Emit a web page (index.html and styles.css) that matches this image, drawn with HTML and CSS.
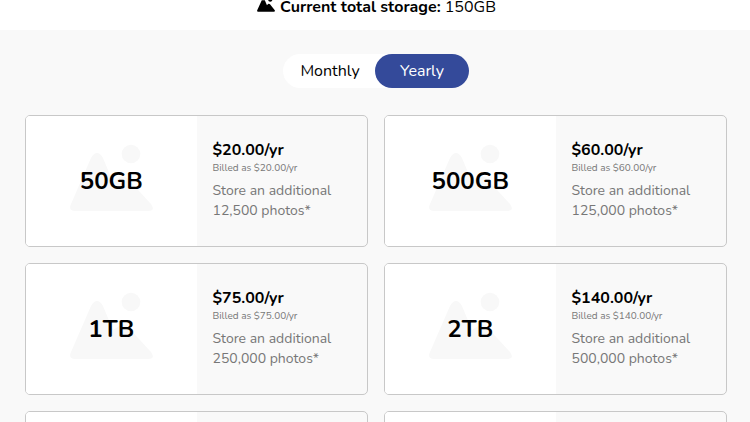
FILE: index.html
```html
<!DOCTYPE html>
<html lang="en">
<head>
<meta charset="utf-8">
<meta name="viewport" content="width=device-width, initial-scale=1">
<title>Storage plans</title>
<link rel="stylesheet" href="styles.css">
</head>
<body>
<svg class="defs" aria-hidden="true">
  <symbol id="peaks" viewBox="0 0 83 74">
    <path d="M1 60L21 14Q27 4 33 14L43 38L49 34Q53 31 57 34L81 60Q86 67 78 67H5Q-2 67 1 60Z"/>
    <circle cx="61" cy="10" r="9.3"/>
  </symbol>
</svg>
<header class="summary">
  <svg class="summary-icon" viewBox="0 13 83 54" aria-hidden="true">
    <path d="M1 60L22 13H36L46 36L51 31Q55 27 60 32L82 60Q85 67 77 67H5Q-1 66 1 60Z"/>
    <circle cx="61" cy="10" r="10"/>
  </svg>
  <p class="summary-text"><strong>Current total storage:</strong> 150GB</p>
</header>
<main class="plans">
  <div class="toggle">
    <button class="period" type="button" aria-pressed="false">Monthly</button>
    <button class="period active" type="button" aria-pressed="true">Yearly</button>
  </div>
  <div class="grid">
    <article class="card">
      <div class="size"><svg class="watermark" aria-hidden="true"><use href="#peaks"/></svg><h2 class="amount">50GB</h2></div>
      <div class="details"><p class="price">$20.00/yr</p><p class="billed">Billed as $20.00/yr</p><p class="note">Store an additional<br>12,500 photos*</p></div>
    </article>
    <article class="card">
      <div class="size"><svg class="watermark" aria-hidden="true"><use href="#peaks"/></svg><h2 class="amount">500GB</h2></div>
      <div class="details"><p class="price">$60.00/yr</p><p class="billed">Billed as $60.00/yr</p><p class="note">Store an additional<br>125,000 photos*</p></div>
    </article>
    <article class="card">
      <div class="size"><svg class="watermark" aria-hidden="true"><use href="#peaks"/></svg><h2 class="amount">1TB</h2></div>
      <div class="details"><p class="price">$75.00/yr</p><p class="billed">Billed as $75.00/yr</p><p class="note">Store an additional<br>250,000 photos*</p></div>
    </article>
    <article class="card">
      <div class="size"><svg class="watermark" aria-hidden="true"><use href="#peaks"/></svg><h2 class="amount">2TB</h2></div>
      <div class="details"><p class="price">$140.00/yr</p><p class="billed">Billed as $140.00/yr</p><p class="note">Store an additional<br>500,000 photos*</p></div>
    </article>
    <article class="card"><div class="size"></div><div class="details"></div></article>
    <article class="card"><div class="size"></div><div class="details"></div></article>
  </div>
</main>
</body>
</html>
```
FILE: styles.css
```css
* {
  box-sizing: border-box;
}

body {
  margin: 0;
  height: 100vh;
  overflow: hidden;
  background: #f9f9f9;
  color: #000;
  font-family: Nunito, Lato, "Open Sans", sans-serif;
  font-size: 16px;
  line-height: 20px;
}

p,
h2 {
  margin: 0;
}

.defs {
  position: absolute;
  width: 0;
  height: 0;
}

.summary {
  display: flex;
  justify-content: center;
  align-items: flex-start;
  gap: 5px;
  height: 30px;
  padding-left: 3px;
  background: #fff;
}

.summary-icon {
  width: 18px;
  height: 12px;
}

.summary-text {
  line-height: 14px;
}

.plans {
  padding: 24px 23px 24px 25px;
}

.toggle {
  display: flex;
  width: fit-content;
  margin: 0 auto 27px;
  border-radius: 17px;
  background: #fff;
}

.period {
  width: 94px;
  height: 34px;
  padding: 0;
  border: 0;
  border-radius: 17px;
  background: transparent;
  color: #000;
  font: inherit;
}

.period.active {
  margin-left: -2px;
  background: #344a9a;
  color: #fff;
}

.grid {
  display: grid;
  grid-template-columns: 1fr 1fr;
  gap: 16px;
}

.card {
  display: grid;
  grid-template-columns: 1fr 1fr;
  min-height: 132px;
  overflow: hidden;
  border: 1px solid #c8c8c8;
  border-radius: 5px;
}

.size {
  display: grid;
  place-items: center;
  background: #fff;
}

.watermark,
.amount {
  grid-area: 1 / 1;
}

.watermark {
  width: 83px;
  height: 74px;
  fill: #f8f8f8;
}

.amount {
  z-index: 1;
  font-size: 24px;
  line-height: 32px;
}

.details {
  display: flex;
  flex-direction: column;
  justify-content: center;
  padding: 0 16px 1px;
}

.price {
  font-weight: 700;
}

.billed {
  margin-bottom: 5px;
  color: #777;
  font-size: 10px;
  line-height: 16px;
}

.note {
  color: #777;
  font-size: 14px;
}
```
